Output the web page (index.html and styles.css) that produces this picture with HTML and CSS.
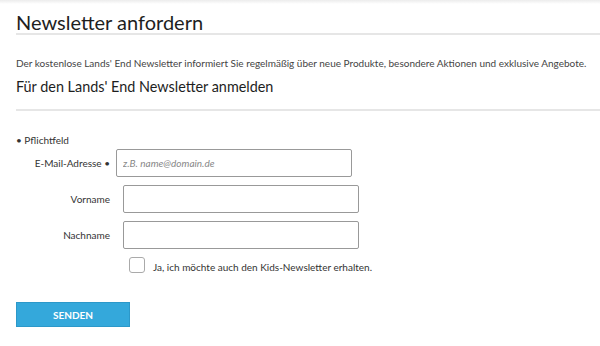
FILE: index.html
```html
<!DOCTYPE html>
<html lang="de">
<head>
<meta charset="utf-8">
<title>Newsletter anfordern</title>
<link rel="stylesheet" href="styles.css">
</head>
<body>
<div class="topshade"></div>
<main class="page">
  <h1 class="title">Newsletter anfordern</h1>
  <p class="intro">Der kostenlose Lands' End Newsletter informiert Sie regelmäßig über neue Produkte, besondere Aktionen und exklusive Angebote.</p>
  <h2 class="subtitle">Für den Lands' End Newsletter anmelden</h2>
  <form class="form">
    <p class="required">• Pflichtfeld</p>
    <div class="row row-email">
      <label class="label" for="email">E-Mail-Adresse •</label>
      <input class="field field-email" id="email" type="text" placeholder="z.B. name@domain.de">
    </div>
    <div class="row">
      <label class="label" for="vorname">Vorname</label>
      <input class="field" id="vorname" type="text">
    </div>
    <div class="row">
      <label class="label" for="nachname">Nachname</label>
      <input class="field" id="nachname" type="text">
    </div>
    <div class="check-row">
      <span class="checkbox"></span>
      <span class="check-text">Ja, ich möchte auch den Kids-Newsletter erhalten.</span>
    </div>
    <button class="submit" type="button">SENDEN</button>
  </form>
</main>
</body>
</html>
```

FILE: styles.css
```css
* { box-sizing: border-box; }
html, body { margin: 0; padding: 0; background: #fff; }
body { font-family: Lato, "Noto Sans", sans-serif; color: #222; }
.topshade {
  height: 4px;
  background: linear-gradient(#ececec, #fff);
}
.page { padding: 0 0 0 16px; }
.title {
  margin: 7px 0 0 0;
  font-size: 20px;
  font-weight: 400;
  line-height: 22px;
  padding-bottom: 0;
  border-bottom: 2px solid #e6e6e6;
  color: #1e1e1e;
}
.intro {
  margin: 21px 0 0 0;
  font-size: 10px;
  line-height: 14px;
  color: #444;
  white-space: nowrap;
}
.subtitle {
  margin: 7px 0 0 0;
  font-size: 14.4px;
  font-weight: 400;
  line-height: 20px;
  padding-bottom: 12px;
  border-bottom: 2px solid #e6e6e6;
  color: #1e1e1e;
}
.form { display: flex; flex-direction: column; }
.required {
  margin: 22px 0 0 0;
  font-size: 10px;
  line-height: 14px;
  color: #333;
}
.row { display: flex; align-items: center; margin-top: 8px; }
.row-email { margin-top: 2px; }
.label {
  width: 94px;
  text-align: right;
  font-size: 10px;
  color: #333;
}
.field {
  width: 236px;
  height: 28px;
  margin-left: 13px;
  border: 1px solid #999;
  border-radius: 2px;
  font-family: Lato, sans-serif;
  font-size: 10px;
  padding: 0 6px;
  outline: none;
}
.field-email { margin-left: 6px; }
.field::placeholder { color: #888; font-style: italic; }
.check-row { display: flex; align-items: center; margin: 7px 0 0 113px; }
.checkbox {
  width: 16px;
  height: 16px;
  border: 1px solid #aaa;
  border-radius: 3px;
}
.check-text { margin-left: 8px; font-size: 10px; color: #333; padding-top: 5px; }
.submit {
  align-self: flex-start;
  margin-top: 29px;
  width: 114px;
  height: 25px;
  background: #34a8db;
  border: 1px solid #2c98c9;
  color: #fff;
  font-family: Lato, sans-serif;
  font-weight: 700;
  font-size: 10px;
  padding: 0;
}
```
